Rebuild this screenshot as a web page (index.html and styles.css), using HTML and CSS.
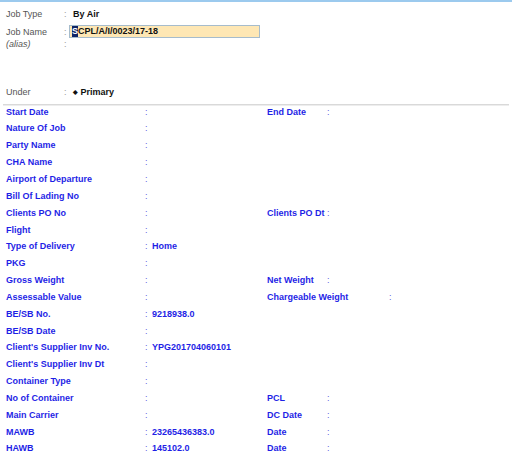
FILE: index.html
```html
<!DOCTYPE html>
<html>
<head>
<meta charset="utf-8">
<link rel="stylesheet" href="styles.css">
</head>
<body>
<div class="topbar"></div>
<div class="header">
  <div class="hrow r1"><span class="hl">Job Type</span><span class="hc">:</span><span class="hv">By Air</span></div>
  <div class="hrow r2"><span class="hl">Job Name</span><span class="hc">:</span><span class="inbox"><span class="sel">S</span>CPL/A/I/0023/17-18</span></div>
  <div class="hrow r3"><span class="hl it">(alias)</span><span class="hc">:</span><span></span></div>
  <div class="hrow r4"><span class="hl">Under</span><span class="hc">:</span><span class="hv"><span class="dia">&#9670;</span> Primary</span></div>
</div>
<div class="sep"></div>
<div class="list">
  <div class="row"><span class="l">Start Date</span><span class="c">:</span><span class="v"></span><span class="rl">End Date</span><span class="c">:</span></div>
  <div class="row"><span class="l">Nature Of Job</span><span class="c">:</span><span class="v"></span></div>
  <div class="row"><span class="l">Party Name</span><span class="c">:</span><span class="v"></span></div>
  <div class="row"><span class="l">CHA Name</span><span class="c">:</span><span class="v"></span></div>
  <div class="row"><span class="l">Airport of Departure</span><span class="c">:</span><span class="v"></span></div>
  <div class="row"><span class="l">Bill Of Lading No</span><span class="c">:</span><span class="v"></span></div>
  <div class="row"><span class="l">Clients PO No</span><span class="c">:</span><span class="v"></span><span class="rl">Clients PO Dt</span><span class="c">:</span></div>
  <div class="row"><span class="l">Flight</span><span class="c">:</span><span class="v"></span></div>
  <div class="row"><span class="l">Type of Delivery</span><span class="c">:</span><span class="v">Home</span></div>
  <div class="row"><span class="l">PKG</span><span class="c">:</span><span class="v"></span></div>
  <div class="row"><span class="l">Gross Weight</span><span class="c">:</span><span class="v"></span><span class="rl">Net Weight</span><span class="c">:</span></div>
  <div class="row"><span class="l">Assessable Value</span><span class="c">:</span><span class="v"></span><span class="rl wide">Chargeable Weight</span><span class="c">:</span></div>
  <div class="row"><span class="l">BE/SB No.</span><span class="c">:</span><span class="v">9218938.0</span></div>
  <div class="row"><span class="l">BE/SB Date</span><span class="c">:</span><span class="v"></span></div>
  <div class="row"><span class="l">Client's Supplier Inv No.</span><span class="c">:</span><span class="v">YPG201704060101</span></div>
  <div class="row"><span class="l">Client's Supplier Inv Dt</span><span class="c">:</span><span class="v"></span></div>
  <div class="row"><span class="l">Container Type</span><span class="c">:</span><span class="v"></span></div>
  <div class="row"><span class="l">No of Container</span><span class="c">:</span><span class="v"></span><span class="rl">PCL</span><span class="c">:</span></div>
  <div class="row"><span class="l">Main Carrier</span><span class="c">:</span><span class="v"></span><span class="rl">DC Date</span><span class="c">:</span></div>
  <div class="row"><span class="l">MAWB</span><span class="c">:</span><span class="v">23265436383.0</span><span class="rl">Date</span><span class="c">:</span></div>
  <div class="row"><span class="l">HAWB</span><span class="c">:</span><span class="v">145102.0</span><span class="rl">Date</span><span class="c">:</span></div>
</div>
</body>
</html>
```
FILE: styles.css
```css
html, body {
  margin: 0;
  padding: 0;
  background: #ffffff;
  width: 512px;
  height: 466px;
  overflow: hidden;
  font-family: "Liberation Sans", Arial, sans-serif;
  font-size: 9px;
}
.topbar {
  height: 2px;
  background: #9ccaee;
}
.header {
  padding-left: 6px;
}
.hrow {
  display: grid;
  grid-template-columns: 58px 5px auto;
  align-items: center;
  white-space: nowrap;
}
.r1 { margin-top: 3px; height: 17px; }
.r2 { margin-top: 2px; height: 15px; }
.r3 { height: 10px; }
.r4 { margin-top: 34.5px; height: 17px; }
.hl { color: #555555; }
.it { font-style: italic; }
.hc { color: #999999; }
.hv {
  padding-left: 4px;
  font-weight: bold;
  color: #111111;
}
.dia { font-size: 6px; vertical-align: 1px; }
.inbox {
  box-sizing: border-box;
  width: 191px;
  height: 13px;
  background: #fee7b4;
  border: 1px solid #a6bccc;
  padding-left: 2px;
  font-weight: bold;
  color: #111111;
  line-height: 11px;
}
.sel {
  display: inline-block;
  background: #0f2466;
  color: #ffffff;
  line-height: 11px;
}
.sep {
  margin-top: 3.5px;
  margin-left: 3px;
  width: 506px;
  border-top: 1px solid #d9d9d9;
  border-bottom: 1px solid #ededed;
}
.list {
  margin-top: -2.4px;
  padding-left: 6px;
}
.row {
  display: grid;
  grid-template-columns: 139px 7px 115px auto auto;
  justify-content: start;
  height: 16.85px;
  line-height: 16.85px;
  white-space: nowrap;
  color: #1f1fe6;
  font-weight: bold;
}
.c {
  font-weight: normal;
  color: #5a5ae0;
}
.rl {
  min-width: 60px;
}
.rl.wide {
  min-width: 122px;
}
```
